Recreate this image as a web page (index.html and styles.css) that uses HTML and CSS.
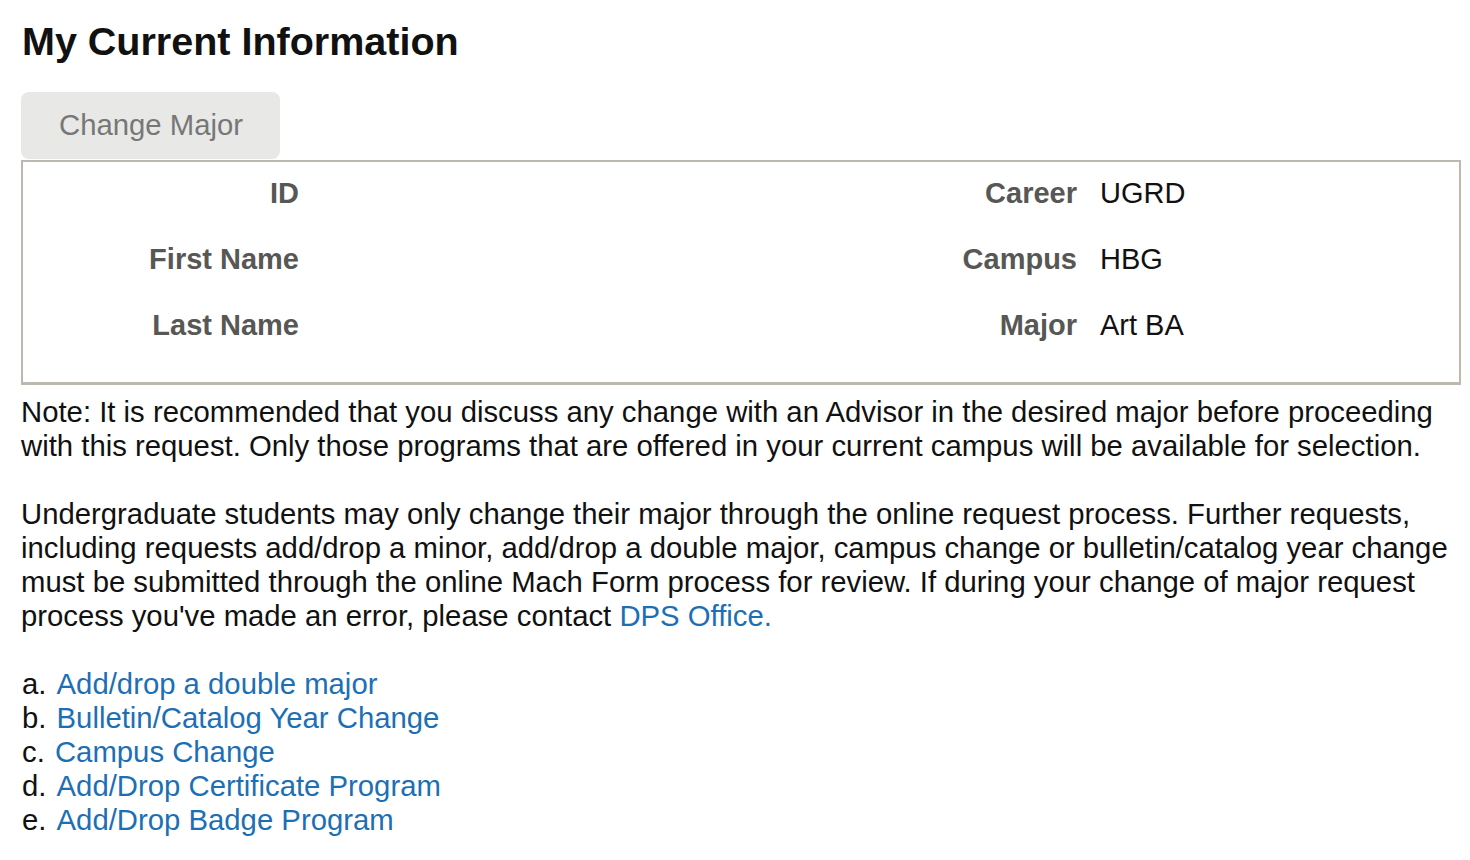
FILE: index.html
```html
<!DOCTYPE html>
<html lang="en">
<head>
    <meta charset="UTF-8">
    <meta name="viewport" content="width=device-width, initial-scale=1.0">
    <title>My Current Information</title>
    <link rel="stylesheet" href="styles.css">
</head>
<body>
    <div class="page">
        <h1>My Current Information</h1>

        <button class="tab-button" type="button">Change Major</button>

        <!-- student record summary -->
        <div class="info-box">
            <div class="info-grid">
                <div class="label">ID</div>
                <div class="value"></div>
                <div class="label">Career</div>
                <div class="value">UGRD</div>

                <div class="label">First Name</div>
                <div class="value"></div>
                <div class="label">Campus</div>
                <div class="value">HBG</div>

                <div class="label">Last Name</div>
                <div class="value"></div>
                <div class="label">Major</div>
                <div class="value">Art BA</div>
            </div>
        </div>

        <div class="notes">
            <p>Note: It is recommended that you discuss any change with an Advisor in the desired major before proceeding with this request. Only those programs that are offered in your current campus will be available for selection.</p>
            <p>Undergraduate students may only change their major through the online request process. Further requests, including requests add/drop a minor, add/drop a double major, campus change or bulletin/catalog year change must be submitted through the online Mach Form process for review. If during your change of major request process you've made an error, please contact <a href="#">DPS Office.</a></p>

            <ol class="forms">
                <li><a href="#">Add/drop a double major</a></li>
                <li><a href="#">Bulletin/Catalog Year Change</a></li>
                <li><a href="#">Campus Change</a></li>
                <li><a href="#">Add/Drop Certificate Program</a></li>
                <li><a href="#">Add/Drop Badge Program</a></li>
            </ol>
        </div>
    </div>
</body>
</html>
```

FILE: styles.css
```css
body {
    margin: 0;
    font-family: "Liberation Sans", Arial, sans-serif;
    color: #111;
    background: #fff;
}

.page {
    padding: 18px 9px 20px 21px;
}

h1 {
    margin: 0 0 28px 1px;
    font-size: 39.5px;
    line-height: 46px;
    font-weight: bold;
    color: #111;
}

.tab-button {
    display: block;
    margin: 0;
    padding: 16px 37px 17px 38px;
    font-family: inherit;
    font-size: 29.3px;
    line-height: 34px;
    color: #777;
    background-color: #e8e8e7;
    border: none;
    border-radius: 8px;
    cursor: pointer;
}

.info-box {
    margin-top: 1px;
    border: 2px solid #bdb9b1;
    border-bottom-width: 3px;
    padding: 14px 0 40px;
}

.info-grid {
    display: grid;
    grid-template-columns: 276px 400px 332px 1fr;
    column-gap: 23px;
    row-gap: 32px;
    font-size: 29px;
    line-height: 34px;
}

.label {
    text-align: right;
    font-weight: bold;
    color: #575755;
}

.value {
    color: #111;
}

.notes {
    margin-top: 10px;
    padding-right: 10px;
    font-size: 29.3px;
    line-height: 34px;
}

.notes p {
    margin: 0 0 34px;
}

.notes a {
    color: #1d6fb4;
    text-decoration: none;
}

.forms {
    margin: 0;
    padding: 0 0 0 1px;
    list-style: lower-alpha inside;
}

.forms li a {
    margin-left: 2px;
}
```
